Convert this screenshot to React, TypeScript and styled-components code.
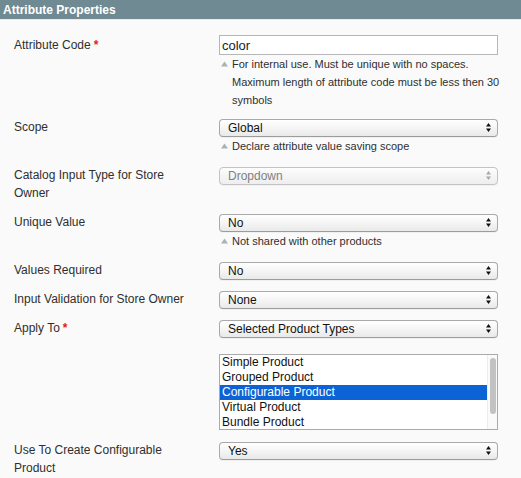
import React from "react";
import styled, { createGlobalStyle } from "styled-components";

const Global = createGlobalStyle`
  html, body { margin: 0; padding: 0; background: #fafafa; }
  body { font-family: "Liberation Sans", Arial, sans-serif; color: #2f2f2f; }
  * { box-sizing: border-box; }
`;

const Page = styled.div`
  width: 521px;
  height: 478px;
  overflow: hidden;
  background: #fafafa;
`;

const Header = styled.div`
  height: 20px;
  background: #6f8a93;
  border-bottom: 1px solid #e6ebed;
  padding: 0 3px;
  display: flex;
  align-items: center;
`;

const HeaderTitle = styled.h3`
  margin: 0;
  font-size: 12px;
  font-weight: bold;
  color: #ffffff;
  line-height: 18px;
`;

const Form = styled.div`
  padding: 15px 23px 0 14px;
  display: flex;
  flex-direction: column;
`;

const Row = styled.div<{ $gap?: number }>`
  display: flex;
  align-items: flex-start;
  margin-bottom: ${(p) => p.$gap ?? 11}px;
`;

const Label = styled.label<{ $offset?: number }>`
  width: 186px;
  margin-right: 19px;
  flex: none;
  font-size: 12px;
  line-height: 18px;
  color: #2f2f2f;
  padding-top: ${(p) => p.$offset ?? 0}px;
`;

const Required = styled.span`
  color: #e3230f;
  font-weight: bold;
  margin-left: 3px;
`;

const Control = styled.div<{ $top?: number }>`
  width: 279px;
  flex: none;
  display: flex;
  flex-direction: column;
  margin-top: ${(p) => p.$top ?? 0}px;
`;

const TextInput = styled.input`
  width: 279px;
  height: 20px;
  border: 1px solid #b6b6b6;
  background: #ffffff;
  padding: 0 2px;
  font-family: "Liberation Sans", Arial, sans-serif;
  font-size: 13px;
  color: #222;
  outline: none;
`;

const SelectWrap = styled.div`
  position: relative;
  width: 279px;
  height: 18px;
`;

const NativeSelect = styled.select`
  appearance: none;
  -webkit-appearance: none;
  width: 100%;
  height: 18px;
  margin: 0;
  border: 1px solid #a9a9a9;
  border-bottom-color: #9c9c9c;
  border-radius: 4px;
  background: linear-gradient(#ffffff 0%, #f6f6f6 45%, #e9e9e9 100%);
  box-shadow: 0 1px 0 rgba(0, 0, 0, 0.04);
  padding: 0 20px 0 8px;
  font-family: "Liberation Sans", Arial, sans-serif;
  font-size: 12px;
  line-height: 16px;
  color: #111;
  outline: none;

  &:disabled {
    color: #808080;
    border-color: #c3c3c3;
    background: linear-gradient(#fdfdfd 0%, #f5f5f5 50%, #eeeeee 100%);
    opacity: 1;
  }
`;

const Arrows = styled.svg`
  position: absolute;
  right: 7px;
  top: 4.5px;
  pointer-events: none;
`;

const Note = styled.div<{ $top?: number }>`
  display: flex;
  align-items: flex-start;
  margin-top: ${(p) => p.$top ?? 1}px;
  padding-left: 2px;
  font-size: 11px;
  line-height: 18px;
  color: #2f2f2f;
`;

const NoteIcon = styled.span`
  flex: none;
  width: 7px;
  height: 18px;
  margin-right: 4px;
  display: flex;
  align-items: center;
`;

const NoteText = styled.span`
  flex: 1;
  margin-right: -8px;
`;

const ListBox = styled.div`
  width: 279px;
  height: 76px;
  border: 1px solid #aaaaaa;
  background: #ffffff;
  display: flex;
`;

const Options = styled.div`
  flex: 1;
  display: flex;
  flex-direction: column;
`;

const Option = styled.div<{ $selected?: boolean }>`
  height: 15px;
  line-height: 15px;
  padding-left: 2px;
  font-size: 12px;
  white-space: nowrap;
  color: ${(p) => (p.$selected ? "#ffffff" : "#111111")};
  background: ${(p) => (p.$selected ? "#0b63d5" : "transparent")};
`;

const ScrollTrack = styled.div`
  width: 10px;
  flex: none;
  border-left: 1px solid #ececec;
  background: #fafafa;
  padding: 3px 0 0 2px;
`;

const ScrollThumb = styled.div`
  width: 6px;
  height: 56px;
  border-radius: 3px;
  background: #c2c2c2;
`;

const Tri = () => (
  <svg width="7" height="6" viewBox="0 0 7 6">
    <path d="M3.5 0.5 L7 5.5 L0 5.5 Z" fill="#a8b3b8" />
  </svg>
);

const Select = ({ value, options, disabled }: { value: string; options: string[]; disabled?: boolean }) => (
  <SelectWrap>
    <NativeSelect defaultValue={value} disabled={disabled}>
      {options.map((o) => (
        <option key={o}>{o}</option>
      ))}
    </NativeSelect>
    <Arrows width="5" height="9" viewBox="0 0 5 9">
      <path d="M2.5 0 L5 3.5 L0 3.5 Z" fill={disabled ? "#a8a8a8" : "#111"} />
      <path d="M2.5 9 L5 5.5 L0 5.5 Z" fill={disabled ? "#a8a8a8" : "#111"} />
    </Arrows>
  </SelectWrap>
);

const Hint = ({ children, top }: { children: React.ReactNode; top?: number }) => (
  <Note $top={top}>
    <NoteIcon>
      <Tri />
    </NoteIcon>
    <NoteText>{children}</NoteText>
  </Note>
);

const productTypes = ["Simple Product", "Grouped Product", "Configurable Product", "Virtual Product", "Bundle Product"];

export default function App() {
  return (
    <Page>
      <Global />
      <Header>
        <HeaderTitle>Attribute Properties</HeaderTitle>
      </Header>
      <Form>
        <Row $gap={9}>
          <Label $offset={1}>
            Attribute Code<Required>*</Required>
          </Label>
          <Control>
            <TextInput defaultValue="color" />
            <Hint top={0}>
              For internal use. Must be unique with no spaces. Maximum length of attribute code must be less then 30
              symbols
            </Hint>
          </Control>
        </Row>
        <Row>
          <Label>Scope</Label>
          <Control>
            <Select value="Global" options={["Store View", "Website", "Global"]} />
            <Hint>Declare attribute value saving scope</Hint>
          </Control>
        </Row>
        <Row>
          <Label>Catalog Input Type for Store Owner</Label>
          <Control>
            <Select value="Dropdown" options={["Dropdown"]} disabled />
          </Control>
        </Row>
        <Row>
          <Label>Unique Value</Label>
          <Control>
            <Select value="No" options={["Yes", "No"]} />
            <Hint>Not shared with other products</Hint>
          </Control>
        </Row>
        <Row>
          <Label>Values Required</Label>
          <Control>
            <Select value="No" options={["Yes", "No"]} />
          </Control>
        </Row>
        <Row>
          <Label>Input Validation for Store Owner</Label>
          <Control>
            <Select value="None" options={["None"]} />
          </Control>
        </Row>
        <Row>
          <Label>
            Apply To<Required>*</Required>
          </Label>
          <Control>
            <Select value="Selected Product Types" options={["All Product Types", "Selected Product Types"]} />
          </Control>
        </Row>
        <Row>
          <Label />
          <Control $top={6}>
            <ListBox role="listbox">
              <Options>
                {productTypes.map((t) => (
                  <Option key={t} $selected={t === "Configurable Product"}>
                    {t}
                  </Option>
                ))}
              </Options>
              <ScrollTrack>
                <ScrollThumb />
              </ScrollTrack>
            </ListBox>
          </Control>
        </Row>
        <Row>
          <Label>Use To Create Configurable Product</Label>
          <Control>
            <Select value="Yes" options={["Yes", "No"]} />
          </Control>
        </Row>
      </Form>
    </Page>
  );
}
